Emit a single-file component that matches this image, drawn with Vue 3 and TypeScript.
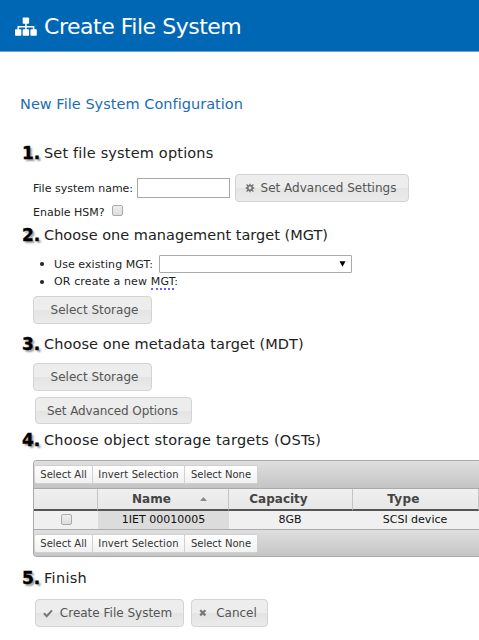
<script setup lang="ts">
import { ref } from 'vue'

const fileSystemName = ref('')
const hsm = ref(false)
const selected = ref(false)
const tableActions = ['Select All', 'Invert Selection', 'Select None']
</script>

<template>
  <div class="page">
    <header class="banner">
      <svg class="sitemap" width="22" height="19" viewBox="0 0 22 19" fill="#fff">
        <rect x="7.7" y="0.4" width="6.4" height="6.4" rx=".8" />
        <rect x="0" y="12.300" width="6.400" height="6.400" rx=".8" />
        <rect x="7.700" y="12.300" width="6.400" height="6.400" rx=".8" />
        <rect x="15.400" y="12.300" width="6.400" height="6.400" rx=".8" />
        <path d="M10.900 6v7M3.200 13V9.700h15.400V13" fill="none" stroke="#fff" stroke-width="1.500" />
      </svg>
      <h1><span>Create File System</span></h1>
    </header>
    <main>
      <h2>New File System Configuration</h2>

      <section class="step options">
        <h3><b>1.</b><span class="t1">Set file system options</span></h3>
        <div class="name-row">
          <label for="fs" class="l1">File system name:</label>
          <input id="fs" v-model="fileSystemName" class="field" type="text" />
          <button class="btn settings">
            <svg width="10" height="10" viewBox="0 0 10 10" fill="none" stroke="#777">
              <circle cx="5" cy="5" r="2.3" stroke-width="1.8" />
              <path d="M5 .7v1.800M5 7.500v1.800M.7 5h1.800M7.500 5h1.800M1.600 1.600l1.500 1.500M6.900 6.900L8.400 8.400M8.400 1.600L6.900 3.100M3.100 6.900L1.600 8.400" stroke-width="1.4" />
            </svg>
            <span>Set Advanced Settings</span>
          </button>
        </div>
        <div class="hsm-row">
          <label for="hsm" class="l2">Enable HSM?</label>
          <input id="hsm" v-model="hsm" class="check" type="checkbox" />
        </div>
      </section>

      <section class="step mgt">
        <h3><b>2.</b><span class="t2">Choose one management target (MGT)</span></h3>
        <ul>
          <li><i></i><span class="l3">Use existing MGT:</span><div class="select" role="combobox" tabindex="0">
            <svg width="7" height="6" viewBox="0 0 7 6"><path d="M.5 .2h6L3.5 5.8z" /></svg></div>
          </li>
          <li><i></i><span class="l4">OR create a new <span class="term">MGT</span>:</span></li>
        </ul>
        <button class="btn storage"><span>Select Storage</span></button>
      </section>

      <section class="step mdt">
        <h3><b>3.</b><span class="t3">Choose one metadata target (MDT)</span></h3>
        <button class="btn storage"><span>Select Storage</span></button>
        <button class="btn advanced"><span>Set Advanced Options</span></button>
      </section>

      <section class="step ost">
        <h3><b>4.</b><span class="t4">Choose object storage targets (OSTs)</span></h3>
        <div class="grid">
          <div class="bar"><button v-for="a in tableActions" :key="a">{{ a }}</button></div>
          <div class="cols head">
            <div></div>
            <div class="name">Name<svg width="7" height="4" viewBox="0 0 7 4"><path d="M3.5 0L7 4H0z" fill="#888" /></svg></div>
            <div class="capacity">Capacity</div>
            <div class="type">Type</div>
          </div>
          <div class="cols row">
            <div><input v-model="selected" class="check" type="checkbox" /></div>
            <div class="sorted">1IET 00010005</div>
            <div>8GB</div>
            <div>SCSI device</div>
          </div>
          <div class="bar"><button v-for="a in tableActions" :key="a">{{ a }}</button></div>
        </div>
      </section>

      <section class="step finish">
        <h3><b>5.</b><span class="t5">Finish</span></h3>
        <div class="actions">
          <button class="btn create">
            <svg width="10" height="9" viewBox="0 0 10 9" fill="none" stroke="#777" stroke-width="2"><path d="M1 4.3l2.7 2.9L9 1.3" /></svg>
            <span>Create File System</span>
          </button>
          <button class="btn cancel">
            <svg width="8" height="8" viewBox="0 0 8 8" fill="none" stroke="#777" stroke-width="2.2"><path d="M1.2 1.2l5.2 5.2M6.4 1.2L1.2 6.4" /></svg>
            <span>Cancel</span>
          </button>
        </div>
      </section>
    </main>
  </div>
</template>

<style>
body { background: #fff; overflow: hidden; }
</style>

<style scoped>
* { box-sizing: border-box; }
.page { width: 479px; height: 640px; overflow: hidden; font-family: Verdana, "DejaVu Sans", sans-serif; font-size: 11px; color: #222; white-space: nowrap; }
.banner { height: 52px; background: #0067b5; border-bottom: 1px solid #69a7d5; display: flex; align-items: center; padding: 2px 0 0 15px; color: #fff; }
.sitemap { flex: none; margin-right: 7px; }
h1 { margin: 0; font-size: 22px; font-weight: 400; line-height: 30px; letter-spacing: -.48px; }
h2 { margin: 42px 0 0 20px; height: 20px; line-height: 20px; font-size: 14.5px; font-weight: 400; color: #1b6db5; letter-spacing: .03px; }
.step { padding-left: 33px; }
.options { height: 82px; margin-top: 29px; }
.mgt { height: 109px; }
.mdt { height: 96px; }
.ost { height: 138px; }
h3 { margin: 0 0 0 -11px; height: 20px; display: flex; line-height: 20px; font-size: 14.5px; font-weight: 400; }
h3 b { width: 22px; flex: none; font-size: 17px; color: #000; -webkit-text-stroke: .4px #000; text-shadow: 2px 2px 2px #999; }
.t1 { letter-spacing: .17px; }
.t2 { letter-spacing: .01px; }
.t3 { letter-spacing: .08px; }
.t4 { letter-spacing: .22px; }
.t5 { letter-spacing: .3px; }
button { font-family: inherit; margin: 0; white-space: nowrap; }
.btn { height: 28px; padding: 0; display: flex; align-items: center; justify-content: center; border: 1px solid #d3d3d3; border-radius: 4px; background: linear-gradient(#ededed 0 50%, #e4e4e4 51%, #ebebeb); color: #555; font-size: 12px; flex: none; }
.btn svg { flex: none; }
.name-row { margin-top: 11px; height: 28px; display: flex; align-items: center; }
.name-row label { width: 104px; }
.field { width: 93px; height: 20px; border: 1px solid #aaa; background: #fff; margin: 0 5px 0 0; padding: 1px; }
.settings { width: 174px; gap: 6px; padding-right: 3px; }
.hsm-row { height: 20px; display: flex; align-items: center; }
.hsm-row label { width: 79px; }
.check { appearance: none; width: 11px; height: 11px; margin: 0 0 3px; border: 1px solid #aaa; border-radius: 2px; background: linear-gradient(#eee, #ddd); }
.check:checked { background: #777; }
ul { list-style: none; margin: 10px 0 0 7px; padding: 0; }
li { height: 18px; display: flex; align-items: center; }
li + li { height: 17px; }
li i { width: 4px; height: 4px; border-radius: 50%; background: #222; margin-right: 10px; }
.l3 { width: 105px; letter-spacing: .08px; }
.l4 { letter-spacing: .13px; }
.select { width: 193px; height: 18px; border: 1px solid #aaa; border-radius: 1px; display: flex; justify-content: flex-end; align-items: center; padding-right: 5px; }
.term { border-bottom: 2px dotted #6262ff; }
.storage { width: 119px; padding-left: 4px; }
.mgt .storage { margin-top: 6px; }
.mdt .storage { margin-top: 9px; }
.advanced { width: 157px; margin: 6px 0 0 2px; height: 27px; padding-right: 2px; letter-spacing: -.1px; }
.grid { width: 460px; height: 97px; margin-top: 10px; border: 1px solid #aaa; border-right: 0; border-radius: 4px 0 0 4px; overflow: hidden; }
.bar { height: 27px; padding-left: 1px; display: flex; align-items: center; background: linear-gradient(#dfdfdf, #c4c4c4); }
.bar button { height: 19px; padding: 0; border: 1px solid #d0d0d0; border-left: 0; background: linear-gradient(#fff, #f1f1f1); color: #333; font-size: 10px; text-align: center; }
.bar button:nth-child(1) { width: 58px; border-radius: 2px 0 0 2px; }
.bar button:nth-child(2) { width: 92px; letter-spacing: .1px; }
.bar button:nth-child(3) { width: 73px; border-radius: 0 2px 2px 0; }
.cols { display: grid; grid-template-columns: 64px 131px 124px 126px 15px; text-align: center; }
.head { height: 23px; border-top: 1px solid #aaa; background: linear-gradient(#f0f0f0, #e6e6e6); font-size: 12px; line-height: 21px; font-weight: 700; color: #444; }
.head div { height: 22px; border-right: 1px solid #c4c4c4; border-bottom: 2px solid #555; }
.head .name { display: flex; align-items: center; justify-content: space-between; padding: 0 21px 0 34px; }
.head .capacity { padding-right: 24px; }
.head .type { padding-right: 24px; letter-spacing: .3px; }
.row { height: 19px; background: #f0f0f0; border-bottom: 1px solid #aaa; line-height: 18px; color: #111; }
.row div:nth-child(n+3) { padding-right: 2px; }
.row .check { vertical-align: top; margin: 3px 0 0; }
.sorted { background: #dcdcdc; }
.actions { display: flex; gap: 7px; margin: 11px 0 0 2px; }
.create { width: 149px; gap: 7px; padding-right: 4px; }
.cancel { width: 77px; gap: 9px; padding-right: 3px; }
</style>
